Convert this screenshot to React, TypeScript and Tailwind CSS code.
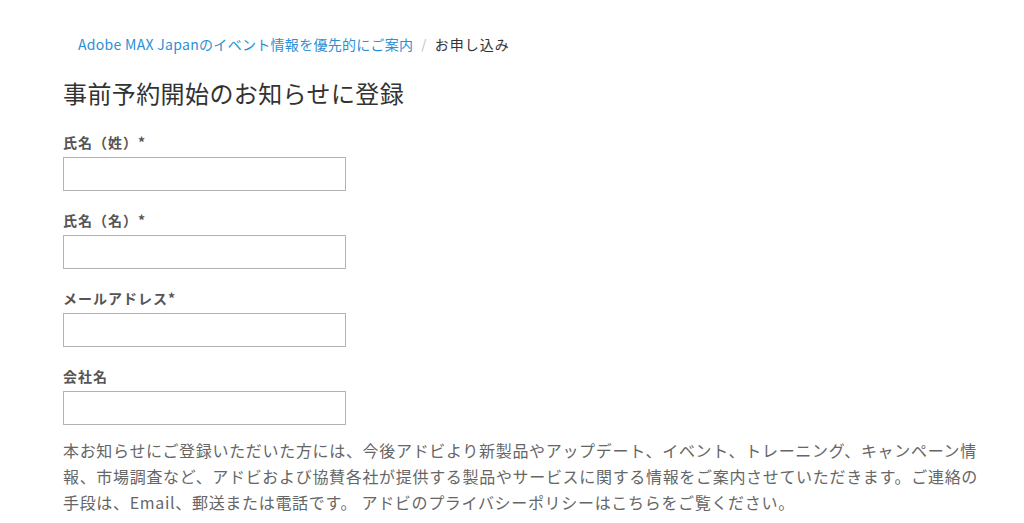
import React from "react";

const jp = { fontFamily: '"Noto Sans CJK JP", "Noto Sans", sans-serif' };

function Field({ label }: { label: string }) {
  return (
    <div className="flex flex-col">
      <div className="text-[14px] leading-[20px] font-bold tracking-[1px] text-[#555555]">{label}</div>
      <div className="mt-[5px] w-[283px] h-[34px] border border-[#b3b3b3] bg-white" />
    </div>
  );
}

export default function App() {
  return (
    <div
      className="w-[1024px] h-[523px] bg-white overflow-hidden pl-[63px] pt-[34px]"
      style={jp}
    >
      <nav className="ml-[15px] flex items-center text-[14px] leading-[20px] tracking-[0.3px] whitespace-nowrap">
        <a className="text-[#2b8fd6]">Adobe MAX Japanのイベント情報を優先的にご案内</a>
        <span className="mx-[8px] text-[#bbbbbb] text-[13px]">/</span>
        <span className="text-[#333333] tracking-[1px]">お申し込み</span>
      </nav>
      <h1 className="mt-[23px] text-[24px] leading-[32px] tracking-[0.4px] text-[#333333] font-normal whitespace-nowrap">
        事前予約開始のお知らせに登録
      </h1>
      <div className="mt-[23px] flex flex-col gap-[19px]">
        <Field label="氏名（姓）*" />
        <Field label="氏名（名）*" />
        <Field label="メールアドレス*" />
        <Field label="会社名" />
      </div>
      <p className="mt-[12px] text-[16px] leading-[26px] tracking-[0.68px] text-[#666666] whitespace-nowrap">
        本お知らせにご登録いただいた方には、今後アドビより新製品やアップデート、イベント、トレーニング、キャンペーン情
        <br />
        報、市場調査など、アドビおよび協賛各社が提供する製品やサービスに関する情報をご案内させていただきます。ご連絡の
        <br />
        手段は、Email、郵送または電話です。 アドビのプライバシーポリシーはこちらをご覧ください。
      </p>
    </div>
  );
}
